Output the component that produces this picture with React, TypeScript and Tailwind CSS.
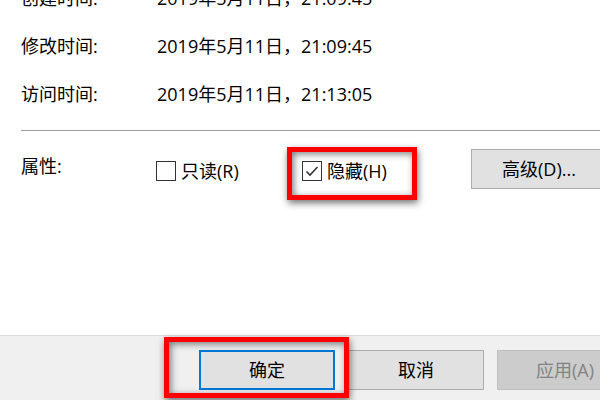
const font = {
  fontFamily: '"Open Sans", "Noto Sans CJK SC", sans-serif',
};

function TimeRow({ label, value }: { label: string; value: string }) {
  return (
    <div className="flex h-[48px] items-center">
      <div className="w-[136px] shrink-0">{label}</div>
      <div className="whitespace-nowrap">{value}</div>
    </div>
  );
}

function CheckBox({ checked, label }: { checked?: boolean; label: string }) {
  return (
    <div className="flex items-center gap-[5px]">
      <div className="flex h-[20px] w-[20px] items-center justify-center border-[1.5px] border-[#333333] bg-white">
        {checked && (
          <svg width="14" height="14" viewBox="0 0 14 14">
            <polyline
              points="1.5,7.5 5,11 12.5,3"
              fill="none"
              stroke="#333333"
              strokeWidth="1.6"
            />
          </svg>
        )}
      </div>
      <span>{label}</span>
    </div>
  );
}

export default function App() {
  return (
    <div
      className="relative h-[400px] w-[600px] overflow-hidden bg-white text-[18px] leading-none text-black"
      style={font}
    >
      <div className="flex h-[335px] flex-col pl-[21px]">
        <div className="-mt-[26px]">
          <TimeRow label="创建时间:" value="2019年5月11日，21:09:45" />
          <TimeRow label="修改时间:" value="2019年5月11日，21:09:45" />
          <TimeRow label="访问时间:" value="2019年5月11日，21:13:05" />
        </div>
        <div className="mt-[12px] h-px bg-[#a0a0a0]" />
        <div className="mt-[18px] flex items-center">
          <div className="-mt-[6px] w-[135px] shrink-0">属性:</div>
          <div className="mt-[3px] w-[146px] shrink-0">
            <CheckBox label="只读(R)" />
          </div>
          <div className="mt-[3px] w-[169px] shrink-0">
            <CheckBox checked label="隐藏(H)" />
          </div>
          <button className="flex h-[40px] w-[136px] shrink-0 items-center justify-center border border-[#adadad] bg-[#e1e1e1]">
            高级(D)...
          </button>
        </div>
      </div>

      <div className="flex h-[65px] gap-[13px] border-t border-[#dcdcdc] bg-[#f0f0f0] pl-[199px] pt-[14px]">
        <button className="flex h-[40px] w-[136px] shrink-0 items-center justify-center border-2 border-[#0078d7] bg-[#e1e1e1]">
          确定
        </button>
        <button className="flex h-[40px] w-[136px] shrink-0 items-center justify-center border border-[#adadad] bg-[#e1e1e1]">
          取消
        </button>
        <button className="flex h-[40px] w-[136px] shrink-0 items-center justify-center border border-[#bfbfbf] bg-[#cccccc] text-[#838383]">
          应用(A)
        </button>
      </div>

      <div className="absolute left-[287px] top-[147px] h-[53px] w-[130px] border-[5px] border-[#ff0000] shadow-[1px_3px_7px_rgba(0,0,0,0.55),inset_2px_2px_7px_rgba(0,0,0,0.5)]" />
      <div className="absolute left-[164px] top-[337px] h-[61px] w-[185px] border-[5px] border-[#ff0000] shadow-[1px_3px_7px_rgba(0,0,0,0.55),inset_2px_2px_7px_rgba(0,0,0,0.5)]" />
    </div>
  );
}
